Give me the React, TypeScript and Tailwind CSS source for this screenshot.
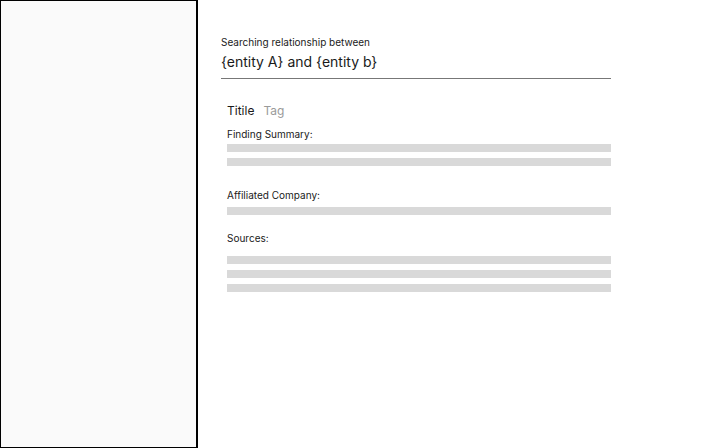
export default function App() {
  return (
    <div className="flex h-[448px] w-[720px] bg-white font-['Inter','Liberation_Sans',sans-serif] text-[#1a1a1a]">
      {/* Sidebar */}
      <aside className="h-[448px] w-[198px] shrink-0 border border-r-2 border-black bg-[#fafafa]" />

      {/* Main */}
      <main className="flex w-[413px] flex-col pl-[23px] pt-[36px]">
        <p className="text-[10px] leading-[12px]">Searching relationship between</p>
        <p className="mt-[5px] text-[14px] leading-[18px]">{"{entity A} and {entity b}"}</p>
        <div className="mt-[7px] h-px bg-[#777777]" />

        <section className="mt-[24px] flex flex-col pl-[6px]">
          <div className="flex items-baseline gap-[9px]">
            <span className="text-[12px] leading-[16px]">Titile</span>
            <span className="text-[12px] leading-[16px] text-[#9a9a9a]">Tag</span>
          </div>

          <p className="mt-[9px] text-[10px] leading-[12px]">Finding Summary:</p>
          <div className="mt-[4px] h-[8px] bg-[#d9d9d9]" />
          <div className="mt-[6px] h-[8px] bg-[#d9d9d9]" />

          <p className="mt-[23px] text-[10px] leading-[12px]">Affiliated Company:</p>
          <div className="mt-[6px] h-[8px] bg-[#d9d9d9]" />

          <p className="mt-[17px] text-[10px] leading-[12px]">Sources:</p>
          <div className="mt-[12px] flex flex-col gap-[6px]">
            <div className="h-[8px] bg-[#d9d9d9]" />
            <div className="h-[8px] bg-[#d9d9d9]" />
            <div className="h-[8px] bg-[#d9d9d9]" />
          </div>
        </section>
      </main>
    </div>
  );
}
